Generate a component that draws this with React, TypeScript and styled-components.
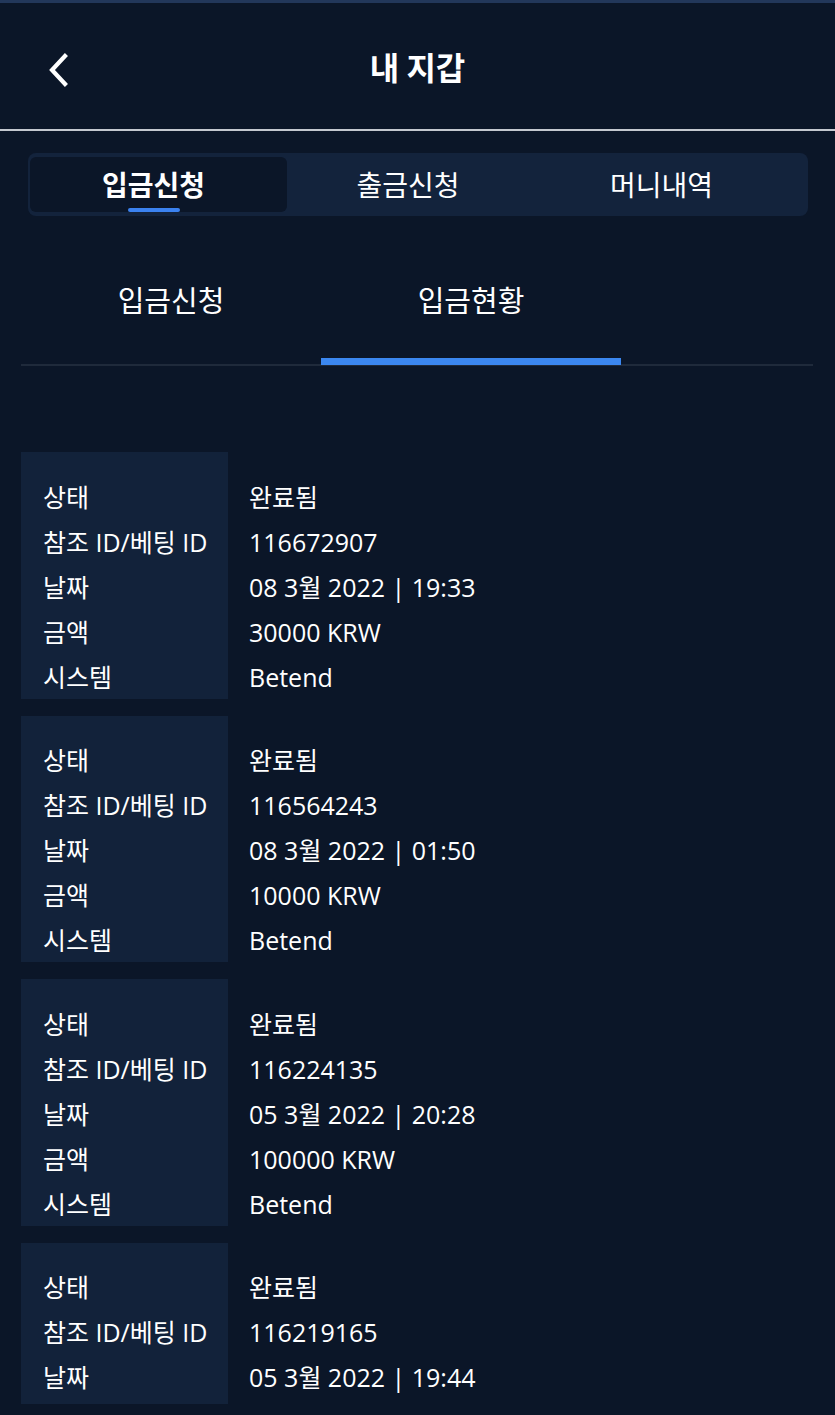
import React from "react";
import styled, { createGlobalStyle } from "styled-components";

const GlobalStyle = createGlobalStyle`
  html, body { margin: 0; padding: 0; background: #0b1628; }
  body { font-family: "Open Sans", "Noto Sans CJK KR", sans-serif; color: #ffffff; }
  * { box-sizing: border-box; }
`;

const Page = styled.div`
  width: 835px;
  min-height: 1415px;
  background: #0b1628;
  border-top: 3px solid #22375a;
  overflow: hidden;
`;

const Header = styled.header`
  position: relative;
  height: 128px;
  display: flex;
  align-items: center;
  justify-content: center;
  border-bottom: 2px solid #c4c8cf;
`;

const BackButton = styled.button`
  position: absolute;
  left: 38px;
  top: 45px;
  width: 40px;
  height: 44px;
  background: none;
  border: none;
  padding: 0;
  display: flex;
  align-items: center;
  justify-content: center;
  cursor: pointer;
`;

const Title = styled.h1`
  margin: 0;
  font-family: "Noto Sans CJK KR", sans-serif;
  font-size: 32px;
  font-weight: 700;
  color: #ffffff;
`;

const TabBar = styled.nav`
  margin: 22px 27px 0 28px;
  height: 63px;
  background: #13233c;
  border-radius: 8px;
  padding: 4px 2px;
  display: grid;
  grid-template-columns: 257px 252px 255px;
`;

const Tab = styled.div<{ $active?: boolean }>`
  position: relative;
  display: flex;
  align-items: center;
  justify-content: center;
  border-radius: 6px;
  background: ${(p) => (p.$active ? "#0b1628" : "transparent")};
  font-family: "Noto Sans CJK KR", sans-serif;
  font-size: 28px;
  font-weight: ${(p) => (p.$active ? 700 : 400)};
  color: #ffffff;
  padding: 0 10px 2px 0;
`;

const TabIndicator = styled.span`
  position: absolute;
  left: 98px;
  bottom: 0;
  width: 52px;
  height: 4px;
  border-radius: 2px;
  background: #3b82f0;
`;

const SubTabBar = styled.nav`
  margin: 34px 22px 0 21px;
  display: flex;
  border-bottom: 2px solid #1f2a3b;
`;

const SubTab = styled.div<{ $active?: boolean }>`
  position: relative;
  width: 300px;
  height: 114px;
  display: flex;
  justify-content: center;
  padding-top: 28px;
  font-family: "Noto Sans CJK KR", sans-serif;
  font-size: 29px;
  color: #ffffff;
  &::after {
    content: "";
    position: absolute;
    left: 0;
    right: 0;
    bottom: -1px;
    height: 7px;
    background: ${(p) => (p.$active ? "#3b87f0" : "transparent")};
  }
`;

const List = styled.div`
  margin: 86px 0 0 21px;
  display: flex;
  flex-direction: column;
  gap: 17px;
`;

const Card = styled.div<{ $tail?: number }>`
  display: flex;
  padding-bottom: 0;
`;

const LabelCol = styled.div<{ $tail: number }>`
  width: 207px;
  background: #12223a;
  padding: 21.5px 0 ${(p) => p.$tail}px 22px;
`;

const ValueCol = styled.div`
  padding: 21.5px 0 0 21px;
`;

const Cell = styled.div`
  height: 45px;
  line-height: 47px;
  font-size: 25px;
  color: #ffffff;
  white-space: nowrap;
`;

type Entry = { id: string; date: string; amount?: string; rows: number };

const entries: Entry[] = [
  { id: "116672907", date: "08 3월 2022 | 19:33", amount: "30000 KRW", rows: 5 },
  { id: "116564243", date: "08 3월 2022 | 01:50", amount: "10000 KRW", rows: 5 },
  { id: "116224135", date: "05 3월 2022 | 20:28", amount: "100000 KRW", rows: 5 },
  { id: "116219165", date: "05 3월 2022 | 19:44", rows: 3 },
];

export default function App() {
  return (
    <>
      <GlobalStyle />
      <Page>
        <Header>
          <BackButton aria-label="back">
            <svg width="24" height="34" viewBox="0 0 24 34" fill="none">
              <path d="M19 3 L6 17 L19 31" stroke="#ffffff" strokeWidth="4.2" strokeLinecap="square" strokeLinejoin="miter" />
            </svg>
          </BackButton>
          <Title>내 지갑</Title>
        </Header>
        <TabBar>
          <Tab $active>
            입금신청
            <TabIndicator />
          </Tab>
          <Tab>출금신청</Tab>
          <Tab>머니내역</Tab>
        </TabBar>
        <SubTabBar>
          <SubTab>입금신청</SubTab>
          <SubTab $active>입금현황</SubTab>
        </SubTabBar>
        <List>
          {entries.map((e) => {
            const labels = ["상태", "참조 ID/베팅 ID", "날짜", "금액", "시스템"].slice(0, e.rows);
            const values = ["완료됨", e.id, e.date, e.amount ?? "", "Betend"].slice(0, e.rows);
            return (
              <Card key={e.id}>
                <LabelCol $tail={e.rows < 5 ? 5 : 0}>
                  {labels.map((l) => (
                    <Cell key={l}>{l}</Cell>
                  ))}
                </LabelCol>
                <ValueCol>
                  {values.map((v, i) => (
                    <Cell key={i}>{v}</Cell>
                  ))}
                </ValueCol>
              </Card>
            );
          })}
        </List>
      </Page>
    </>
  );
}
